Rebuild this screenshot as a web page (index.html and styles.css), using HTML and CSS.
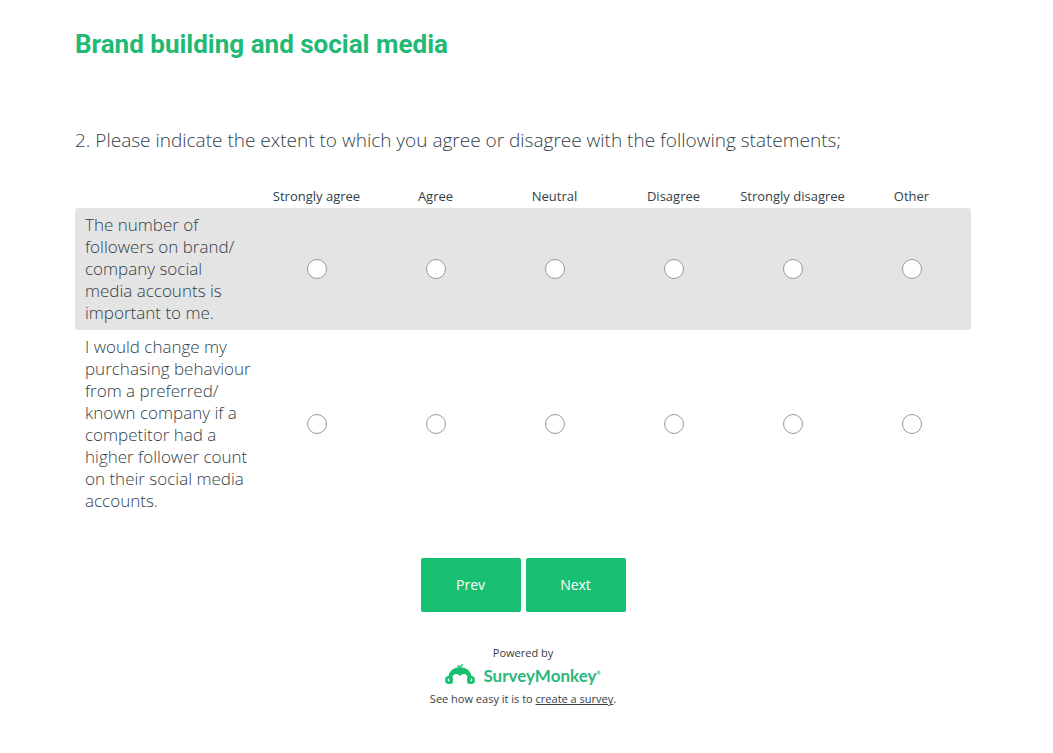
FILE: index.html
```html
<!DOCTYPE html>
<html lang="en">
<head>
  <meta charset="utf-8">
  <title>Brand building and social media</title>
  <link rel="stylesheet" href="styles.css">
</head>
<body>
  <main class="survey">
    <h1>Brand building and social media</h1>

    <form>
      <h2 id="question">2. Please indicate the extent to which you agree or disagree with the following statements;</h2>

      <table class="matrix" aria-labelledby="question">
        <thead>
          <tr>
            <td class="label-col"></td>
            <th scope="col">Strongly agree</th>
            <th scope="col">Agree</th>
            <th scope="col">Neutral</th>
            <th scope="col">Disagree</th>
            <th scope="col">Strongly disagree</th>
            <th scope="col">Other</th>
          </tr>
        </thead>
        <tbody>
          <tr>
            <th scope="row">The number of followers on brand/<wbr>company social media accounts is important to me.</th>
            <td><input type="radio" name="followers" value="1" aria-label="Strongly agree"></td>
            <td><input type="radio" name="followers" value="2" aria-label="Agree"></td>
            <td><input type="radio" name="followers" value="3" aria-label="Neutral"></td>
            <td><input type="radio" name="followers" value="4" aria-label="Disagree"></td>
            <td><input type="radio" name="followers" value="5" aria-label="Strongly disagree"></td>
            <td><input type="radio" name="followers" value="6" aria-label="Other"></td>
          </tr>
          <tr>
            <th scope="row">I would change my purchasing behaviour from a preferred/<wbr>known company if a competitor had a higher follower count on their social media accounts.</th>
            <td><input type="radio" name="behaviour" value="1" aria-label="Strongly agree"></td>
            <td><input type="radio" name="behaviour" value="2" aria-label="Agree"></td>
            <td><input type="radio" name="behaviour" value="3" aria-label="Neutral"></td>
            <td><input type="radio" name="behaviour" value="4" aria-label="Disagree"></td>
            <td><input type="radio" name="behaviour" value="5" aria-label="Strongly disagree"></td>
            <td><input type="radio" name="behaviour" value="6" aria-label="Other"></td>
          </tr>
        </tbody>
      </table>

      <div class="buttons">
        <button type="button">Prev</button>
        <button type="submit">Next</button>
      </div>
    </form>

    <footer class="footer">
      <div>Powered by</div>
      <a class="logo" href="#">
        <svg width="30" height="24" viewBox="0 0 30 24" aria-hidden="true">
          <!-- ears -->
          <circle cx="4" cy="16" r="2.700" fill="#fff" stroke="#17bf73" stroke-width="2.600"/>
          <circle cx="26" cy="16" r="2.700" fill="#fff" stroke="#17bf73" stroke-width="2.600"/>
          <!-- head -->
          <path fill="#17bf73" d="M3.500 12C4.500 6.500 9.500 3.200 15 3.200S25.500 6.500 26.500 12l-1.500 7.500h-2.800c1.300-5 .5-9.500-3.200-9.500-1.700 0-2.900.8-4 2-1.100-1.200-2.300-2-4-2-3.700 0-4.500 4.500-3.200 9.500H5z"/>
          <!-- hair -->
          <path fill="none" stroke="#17bf73" stroke-width="1.400" d="M12 2c1.800 0 2.800.6 3.200 2 .1-1.700.9-2.700 2.600-3.500"/>
        </svg>
        <span>SurveyMonkey<sup>®</sup></span>
      </a>
      <div>See how easy it is to <a class="create" href="#">create a survey</a>.</div>
    </footer>
  </main>
</body>
</html>
```
FILE: styles.css
```css
body { font-family: "Open Sans", sans-serif; margin: 0; color: #333e48; background: #fff; }
.survey { padding: 28px 82px 40px 75px; }
h1 { margin: 0; font-family: Roboto, sans-serif; font-size: 26px; line-height: 32px; font-weight: 700; color: #21b973; }
h2 { margin: 66px 0 30px; font-size: 19px; line-height: 28px; font-weight: 300; }
.matrix { width: 100%; table-layout: fixed; border-collapse: separate; border-spacing: 0; }
.matrix td { padding: 0; text-align: center; vertical-align: middle; }
.matrix .label-col { width: 182px; }
.matrix thead th { padding: 0; font-size: 13px; line-height: 24px; font-weight: 400; }
.matrix tbody th { padding: 6px 4px 6px 10px; font-size: 17px; line-height: 22px; font-weight: 300; text-align: left; }
.matrix tbody tr:nth-child(odd) > * { background: #e4e4e4; }
.matrix tbody th { border-radius: 3px 0 0 3px; }
.matrix tbody td:last-child { border-radius: 0 3px 3px 0; }
.matrix input { appearance: none; display: block; width: 20px; height: 20px; margin: 0 auto; border: 1px solid #999; border-radius: 50%; background: #fff; }
.matrix input:checked { border: 6px solid #00bf6f; }
.buttons { display: flex; justify-content: center; gap: 5px; margin-top: 40px; }
.buttons button { width: 100px; height: 54px; padding: 0 0 2px; border: 0; border-radius: 2px; background: #17bf73; color: #fff; font-family: inherit; font-size: 14px; }
.footer { margin-top: 32px; text-align: center; font-size: 11px; line-height: 18px; }
.logo { display: flex; justify-content: center; align-items: center; gap: 8px; height: 28px; color: #2db67c; text-decoration: none; font-family: Lato, sans-serif; font-size: 17px; font-weight: 700; }
.logo sup { font-size: 5px; line-height: 0; }
.create { color: inherit; }
```
